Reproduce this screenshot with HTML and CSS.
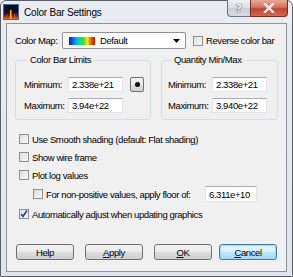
FILE: index.html
```html
<!DOCTYPE html>
<html>
<head>
<meta charset="utf-8">
<link rel="stylesheet" href="styles.css">
</head>
<body>
<div class="window">
  <div class="titlebar">
    <svg class="appicon" width="16" height="16" viewBox="0 0 16 16">
      <defs>
        <linearGradient id="ig" x1="0" y1="0" x2="0" y2="1">
          <stop offset="0" stop-color="#0a0a1e"/>
          <stop offset="0.5" stop-color="#101030"/>
          <stop offset="0.75" stop-color="#8a1a10"/>
          <stop offset="1" stop-color="#f07a10"/>
        </linearGradient>
      </defs>
      <rect x="0.5" y="0.5" width="15" height="15" fill="url(#ig)" stroke="#3a6ea8"/>
      <rect x="7" y="6" width="1.5" height="9" fill="#f6c020"/>
      <rect x="4" y="11" width="1" height="4" fill="#e04010"/>
      <rect x="11" y="10" width="1" height="5" fill="#e05010"/>
    </svg>
    <span class="title">Color Bar Settings</span>
    <div class="capbtns">
      <div class="cap help">?</div>
      <div class="cap close">
        <svg width="12" height="10" viewBox="0 0 12 10"><path d="M2 1 L10 9 M10 1 L2 9" stroke="#fff" stroke-width="2.4" stroke-linecap="square"/><path d="M2 1 L10 9 M10 1 L2 9" stroke="#7a2418" stroke-width="0.6" fill="none" opacity="0.3"/></svg>
      </div>
    </div>
  </div>
  <div class="client">
    <div class="maprow">
      <span class="maplabel">Color Map:</span>
      <div class="combo">
        <span class="grad"></span>
        <span class="combotext">Default</span>
        <svg class="arrow" width="7" height="4" viewBox="0 0 7 4"><path d="M0 0 H7 L3.5 4 Z" fill="#000"/></svg>
      </div>
      <label class="chk rev"><span class="box"></span><span>Reverse color bar</span></label>
    </div>
    <div class="groups">
      <fieldset class="grp g1">
        <legend>Color Bar Limits</legend>
        <div class="frow"><span class="flabel">Minimum:</span><span class="input w55">2.338e+21</span><span class="dotbtn"><span class="dot"></span></span></div>
        <div class="frow"><span class="flabel">Maximum:</span><span class="input w55">3.94e+22</span></div>
      </fieldset>
      <fieldset class="grp g2">
        <legend>Quantity Min/Max</legend>
        <div class="frow"><span class="flabel q">Minimum:</span><span class="input w55">2.338e+21</span></div>
        <div class="frow"><span class="flabel q">Maximum:</span><span class="input w55">3.940e+22</span></div>
      </fieldset>
    </div>
    <div class="checks">
      <label class="chk row"><span class="box"></span><span>Use Smooth shading (default: Flat shading)</span></label>
      <label class="chk row"><span class="box"></span><span>Show wire frame</span></label>
      <label class="chk row"><span class="box"></span><span>Plot log values</span></label>
      <div class="chk row floor"><span class="box"></span><span class="floortext">For non-positive values, apply floor of:</span><span class="input w52">6.311e+10</span></div>
      <label class="chk row"><span class="box checked"><svg width="8" height="8" viewBox="0 0 8 8"><path d="M1 4 L3 6.5 L7 0.5" stroke="#1c3f94" stroke-width="1.6" fill="none"/></svg></span><span>Automatically adjust when updating graphics</span></label>
    </div>
    <div class="buttons">
      <span class="btn">Help</span>
      <span class="btn b2"><u>A</u>pply</span>
      <span class="btn b3"><u>O</u>K</span>
      <span class="btn b4 def"><u>C</u>ancel</span>
    </div>
  </div>
</div>
</body>
</html>
```
FILE: styles.css
```css
html, body { margin: 0; padding: 0; background: #fff; }
.window {
  width: 293px; height: 277px; box-sizing: border-box;
  border: 1px solid #5b5f66; border-radius: 6px 6px 1px 1px;
  background: linear-gradient(#e9edf2, #dfe5ec);
  padding: 0 5px 4px 5px;
  display: flex; flex-direction: column;
  font-family: "Liberation Sans", Arial, sans-serif; font-size: 9.5px; letter-spacing: -0.4px; color: #000;
  white-space: nowrap;
}
.titlebar { height: 22px; display: flex; align-items: flex-start; flex-shrink: 0; }
.appicon { margin: 3px 0 0 -3px; flex-shrink: 0; }
.title { font-size: 10px; letter-spacing: -0.2px; margin: 6px 0 0 5px; color: #000; }
.capbtns { margin-left: auto; margin-top: -1px; margin-right: -1px; display: flex; }
.cap { height: 17px; box-sizing: border-box; display: flex; align-items: center; justify-content: center; border: 1px solid #6d7480; border-top: none; }
.help { width: 23px; border-radius: 0 0 0 4px; border-right: none; background: linear-gradient(#eef1f5 0%, #d8dde4 50%, #c9cfd7 51%, #d6dbe2 100%); font-family: "DejaVu Sans", sans-serif; font-size: 11px; font-weight: bold; letter-spacing: 0; color: #fff; text-shadow: 0 0 1px #333, 0 0 1px #333; }
.close { width: 38px; border-radius: 0 0 4px 0; border-color: #7c2c22; background: linear-gradient(#e9a99c 0%, #d27362 45%, #c1432d 55%, #d56a4f 100%); }
.client {
  flex: 1; background: #f0f0f0; border: 1px solid #8f9398;
  padding: 8px 8px 0 8px; display: flex; flex-direction: column;
}
.maprow { display: flex; align-items: center; height: 17px; }
.maplabel { width: 47px; }
.combo {
  width: 124px; height: 17px; box-sizing: border-box; border: 1px solid #8e9298; border-radius: 2px;
  background: #fff; display: flex; align-items: center;
}
.grad { width: 26px; height: 8px; margin-left: 6px; background: linear-gradient(90deg, #1010e0, #00a0ff 25%, #00e0a0 40%, #30e030 55%, #f0f000 70%, #f06000 85%, #e00000); }
.combotext { margin-left: 5px; }
.arrow { margin-left: auto; margin-right: 5px; }
.chk { display: flex; align-items: center; }
.box {
  width: 10px; height: 10px; box-sizing: border-box; border: 1px solid #8e8f8f;
  background: linear-gradient(135deg, #dcdcdc, #fbfbfb); margin-right: 3px; display: flex; align-items: center; justify-content: center; flex-shrink: 0;
}
.rev { margin-left: 7px; }
.groups { display: flex; margin-top: 5px; }
.grp {
  margin: 0; border: 1px solid #d5dfe5; border-radius: 3px;
  padding: 11px 6px 6px 8px; min-width: 0; box-sizing: border-box;
}
.grp legend { padding: 0 2px; margin-left: 4px; line-height: 12px; }
.g1 { width: 136px; }
.g2 { flex: 1; margin-left: 10px; padding-left: 6px; }
.frow { display: flex; align-items: center; height: 15px; }
.frow + .frow { margin-top: 6px; }
.flabel { width: 44px; }
.input {
  height: 15px; box-sizing: border-box; background: #fff;
  border: 1px solid #e2e3ea; border-top-color: #abadb3;
  padding-left: 3px; display: flex; align-items: center;
}
.w55 { width: 55px; }
.w52 { width: 52px; height: 16px; }
.dotbtn {
  width: 14px; height: 15px; box-sizing: border-box; margin-left: 7px; border: 1px solid #707070; border-radius: 2px;
  background: linear-gradient(#f2f2f2 0%, #ebebeb 50%, #dddddd 51%, #cfcfcf 100%);
  display: flex; align-items: center; justify-content: center;
}
.dot { width: 5px; height: 5px; border-radius: 50%; background: #000; }
.checks { display: flex; flex-direction: column; margin-top: 10px; }
.row { height: 18px; padding-left: 4px; }
.row.floor { height: 20px; padding-left: 18px; }
.floortext { width: 159px; }
.checks .row:last-child { margin-top: 1px; }
.buttons { display: flex; margin-top: 21px; }
.btn {
  width: 58px; height: 16px; box-sizing: border-box; border: 1px solid #707070; border-radius: 3px;
  background: linear-gradient(#f2f2f2 0%, #ebebeb 50%, #dddddd 51%, #cfcfcf 100%);
  display: flex; align-items: center; justify-content: center; margin-left: 1px;
}
.b2 { margin-left: 11px; }
.b3 { margin-left: 11px; }
.b4 { margin-left: 7px; }
.def { border-color: #3c7fb1; background: linear-gradient(#eaf6fd 0%, #d9f0fc 50%, #bee6fd 51%, #a7d9f5 100%); box-shadow: inset 0 0 0 1px #9cd6f5; }
u { text-decoration: underline; }
```
